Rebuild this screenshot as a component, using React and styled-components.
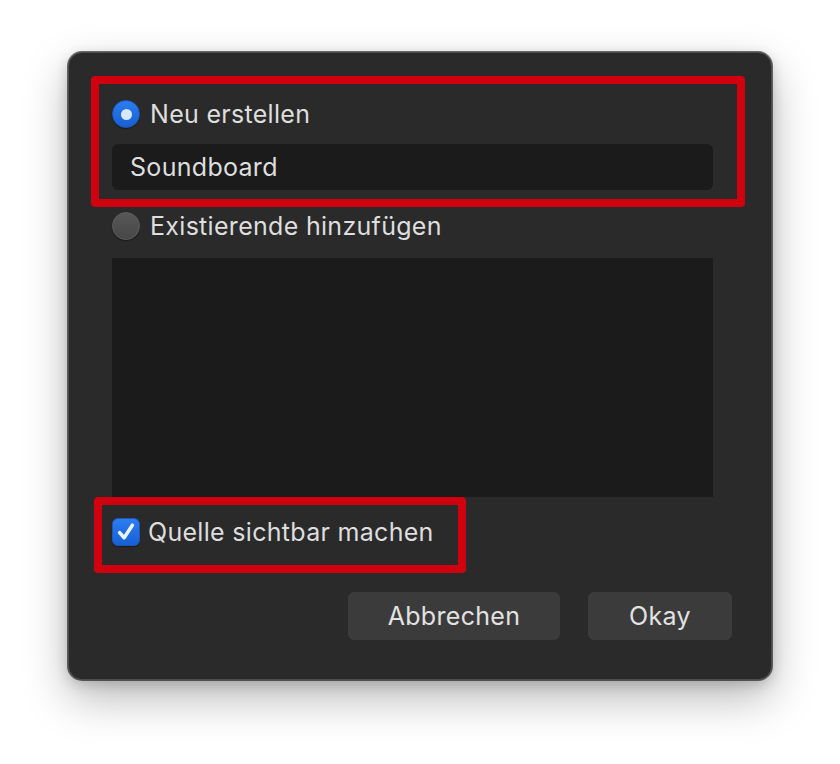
import React from "react";
import styled, { createGlobalStyle } from "styled-components";

const FONT = `Inter, "Liberation Sans", Arial, sans-serif`;

const GlobalStyle = createGlobalStyle`
  html, body {
    margin: 0;
    padding: 0;
    background: #ffffff;
  }
  body {
    font-family: ${FONT};
  }
`;

const Page = styled.div`
  width: 840px;
  height: 764px;
  display: flex;
  justify-content: center;
  align-items: flex-start;
  padding-top: 52px;
  box-sizing: border-box;
`;

const Window = styled.div`
  position: relative;
  width: 704px;
  height: 628px;
  box-sizing: border-box;
  background: #2a2a2a;
  border: 1px solid #4c4c4c;
  border-radius: 14px;
  box-shadow: 0 0 0 1px rgba(0, 0, 0, 0.55), 0 18px 45px rgba(0, 0, 0, 0.28),
    0 4px 14px rgba(0, 0, 0, 0.18);
  padding: 47px 58px 0 43px;
  display: flex;
  flex-direction: column;
  color: #dedede;
  font-size: 25px;
  letter-spacing: 0.3px;
`;

const OptionRow = styled.label`
  display: flex;
  align-items: center;
  gap: 10px;
  height: 28px;
  margin-top: ${(p) => p.top || 0}px;
`;

const Radio = styled.span`
  width: 28px;
  height: 28px;
  border-radius: 50%;
  box-sizing: border-box;
  flex-shrink: 0;
  display: flex;
  align-items: center;
  justify-content: center;
  background: ${(p) =>
    p.checked
      ? "linear-gradient(#2c7cf0, #1760d4)"
      : "linear-gradient(#575757, #474747)"};
  border: 1px solid ${(p) => (p.checked ? "#1a58bf" : "#5c5c5c")};
  box-shadow: 0 1px 1px rgba(0, 0, 0, 0.35);
  &::after {
    content: "";
    display: ${(p) => (p.checked ? "block" : "none")};
    width: 11px;
    height: 11px;
    border-radius: 50%;
    background: #d8e9ff;
  }
`;

const TextField = styled.div`
  margin-top: 16px;
  height: 46px;
  border-radius: 6px;
  background: #1b1b1b;
  display: flex;
  align-items: center;
  padding-left: 18px;
`;

const ListBox = styled.div`
  margin-top: 18px;
  height: 239px;
  background: #1b1b1b;
`;

const CheckRow = styled.label`
  display: flex;
  align-items: center;
  gap: 8px;
  margin-top: 21px;
  height: 28px;
`;

const CheckBox = styled.span`
  width: 28px;
  height: 28px;
  border-radius: 6px;
  box-sizing: border-box;
  flex-shrink: 0;
  background: linear-gradient(#2c7cf0, #1760d4);
  border: 1px solid #1a58bf;
  box-shadow: 0 1px 1px rgba(0, 0, 0, 0.35);
  display: flex;
  align-items: center;
  justify-content: center;
`;

const Footer = styled.div`
  display: flex;
  justify-content: flex-end;
  gap: 28px;
  margin-top: 46px;
  margin-right: -19px;
`;

const Button = styled.button`
  width: ${(p) => p.w}px;
  height: 48px;
  border: none;
  border-radius: 6px;
  background: #3b3b3b;
  color: #e2e2e2;
  font-family: ${FONT};
  font-size: 25px;
  letter-spacing: 0.3px;
  cursor: pointer;
`;

const Highlight = styled.div`
  position: absolute;
  left: ${(p) => p.x}px;
  top: ${(p) => p.y}px;
  width: ${(p) => p.w}px;
  height: ${(p) => p.h}px;
  box-sizing: border-box;
  border: 8px solid #d0000f;
  border-radius: 4px;
  pointer-events: none;
`;

const App = () => {
  return (
    <>
      <GlobalStyle />
      <Page>
        <Window>
          <OptionRow>
            <Radio checked />
            Neu erstellen
          </OptionRow>
          <TextField>Soundboard</TextField>
          <OptionRow top={22}>
            <Radio />
            Existierende hinzufügen
          </OptionRow>
          <ListBox />
          <CheckRow>
            <CheckBox>
              <svg width="22" height="22" viewBox="0 0 20 20">
                <path
                  d="M4.2 10.6 L8.3 15.2 L15.8 3.8"
                  fill="none"
                  stroke="#e9f2ff"
                  strokeWidth="3.2"
                  strokeLinecap="round"
                  strokeLinejoin="round"
                />
              </svg>
            </CheckBox>
            Quelle sichtbar machen
          </CheckRow>
          <Footer>
            <Button w={212}>Abbrechen</Button>
            <Button w={144}>Okay</Button>
          </Footer>
          <Highlight x={22} y={23} w={654} h={131} />
          <Highlight x={25} y={444} w={372} h={76} />
        </Window>
      </Page>
    </>
  );
};

export default App;
